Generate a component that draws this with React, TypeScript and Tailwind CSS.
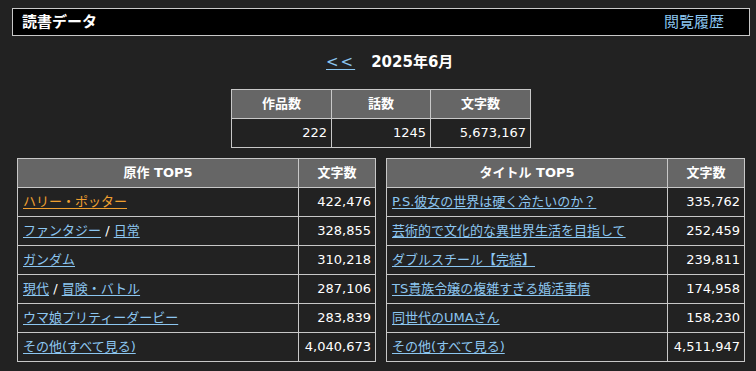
import React from "react";

const font = { fontFamily: '"DejaVu Sans", "Noto Sans CJK JP", sans-serif' };

type Row = { links: { text: string; orange?: boolean }[]; value: string };

const left: Row[] = [
  { links: [{ text: "ハリー・ポッター", orange: true }], value: "422,476" },
  { links: [{ text: "ファンタジー" }, { text: "日常" }], value: "328,855" },
  { links: [{ text: "ガンダム" }], value: "310,218" },
  { links: [{ text: "現代" }, { text: "冒険・バトル" }], value: "287,106" },
  { links: [{ text: "ウマ娘プリティーダービー" }], value: "283,839" },
  { links: [{ text: "その他(すべて見る)" }], value: "4,040,673" },
];

const right: Row[] = [
  { links: [{ text: "P.S.彼女の世界は硬く冷たいのか？" }], value: "335,762" },
  { links: [{ text: "芸術的で文化的な異世界生活を目指して" }], value: "252,459" },
  { links: [{ text: "ダブルスチール【完結】" }], value: "239,811" },
  { links: [{ text: "TS貴族令嬢の複雑すぎる婚活事情" }], value: "174,958" },
  { links: [{ text: "同世代のUMAさん" }], value: "158,230" },
  { links: [{ text: "その他(すべて見る)" }], value: "4,511,947" },
];

function TopTable({ title, rows }: { title: string; rows: Row[] }) {
  return (
    <table className="border-collapse w-[359px] text-[13px] text-white">
      <thead>
        <tr className="h-[29px]">
          <th className="border border-[#c8c8c8] bg-[#666] font-bold text-center p-0 w-[281px]">{title}</th>
          <th className="border border-[#c8c8c8] bg-[#666] font-bold text-center p-0">文字数</th>
        </tr>
      </thead>
      <tbody>
        {rows.map((r, i) => (
          <tr key={i} className="h-[29px]">
            <td className="border border-[#c8c8c8] p-0 pl-[5px] text-left whitespace-nowrap">
              {r.links.map((l, j) => (
                <React.Fragment key={j}>
                  {j > 0 && <span className="text-white"> / </span>}
                  <a
                    href="#"
                    className={
                      "underline underline-offset-2 " + (l.orange ? "text-[#f0a030]" : "text-[#8cc6f0]")
                    }
                  >
                    {l.text}
                  </a>
                </React.Fragment>
              ))}
            </td>
            <td className="border border-[#c8c8c8] p-0 pr-[4px] text-right">{r.value}</td>
          </tr>
        ))}
      </tbody>
    </table>
  );
}

export default function App() {
  return (
    <div className="min-h-[371px] w-[756px] bg-[#222] pt-[8px]" style={font}>
      <div className="ml-[12px] w-[738px] h-[28px] border border-[#c8c8c8] bg-black flex items-center justify-between pl-[9px] pr-[25px]">
        <span className="text-[15px] font-bold text-white">読書データ</span>
        <a href="#" className="text-[15px] text-[#8cc6f0]">閲覧履歴</a>
      </div>
      <div className="h-[53px] flex items-center pl-[326px] gap-[16px]">
        <a href="#" className="text-[15px] text-[#8cc6f0] underline underline-offset-2 tracking-[2px]">&lt;&lt;</a>
        <span className="text-[15px] font-bold text-white">2025年6月</span>
      </div>
      <table className="ml-[231px] border-collapse w-[300px] text-[13px] text-white">
        <thead>
          <tr className="h-[29px]">
            <th className="border border-[#c8c8c8] bg-[#666] font-bold p-0 w-[100px]">作品数</th>
            <th className="border border-[#c8c8c8] bg-[#666] font-bold p-0 w-[99px]">話数</th>
            <th className="border border-[#c8c8c8] bg-[#666] font-bold p-0">文字数</th>
          </tr>
        </thead>
        <tbody>
          <tr className="h-[29px]">
            <td className="border border-[#c8c8c8] p-0 pr-[4px] text-right">222</td>
            <td className="border border-[#c8c8c8] p-0 pr-[4px] text-right">1245</td>
            <td className="border border-[#c8c8c8] p-0 pr-[4px] text-right">5,673,167</td>
          </tr>
        </tbody>
      </table>
      <div className="flex gap-[10px] pl-[17px] mt-[10px]">
        <TopTable title="原作 TOP5" rows={left} />
        <TopTable title="タイトル TOP5" rows={right} />
      </div>
    </div>
  );
}
